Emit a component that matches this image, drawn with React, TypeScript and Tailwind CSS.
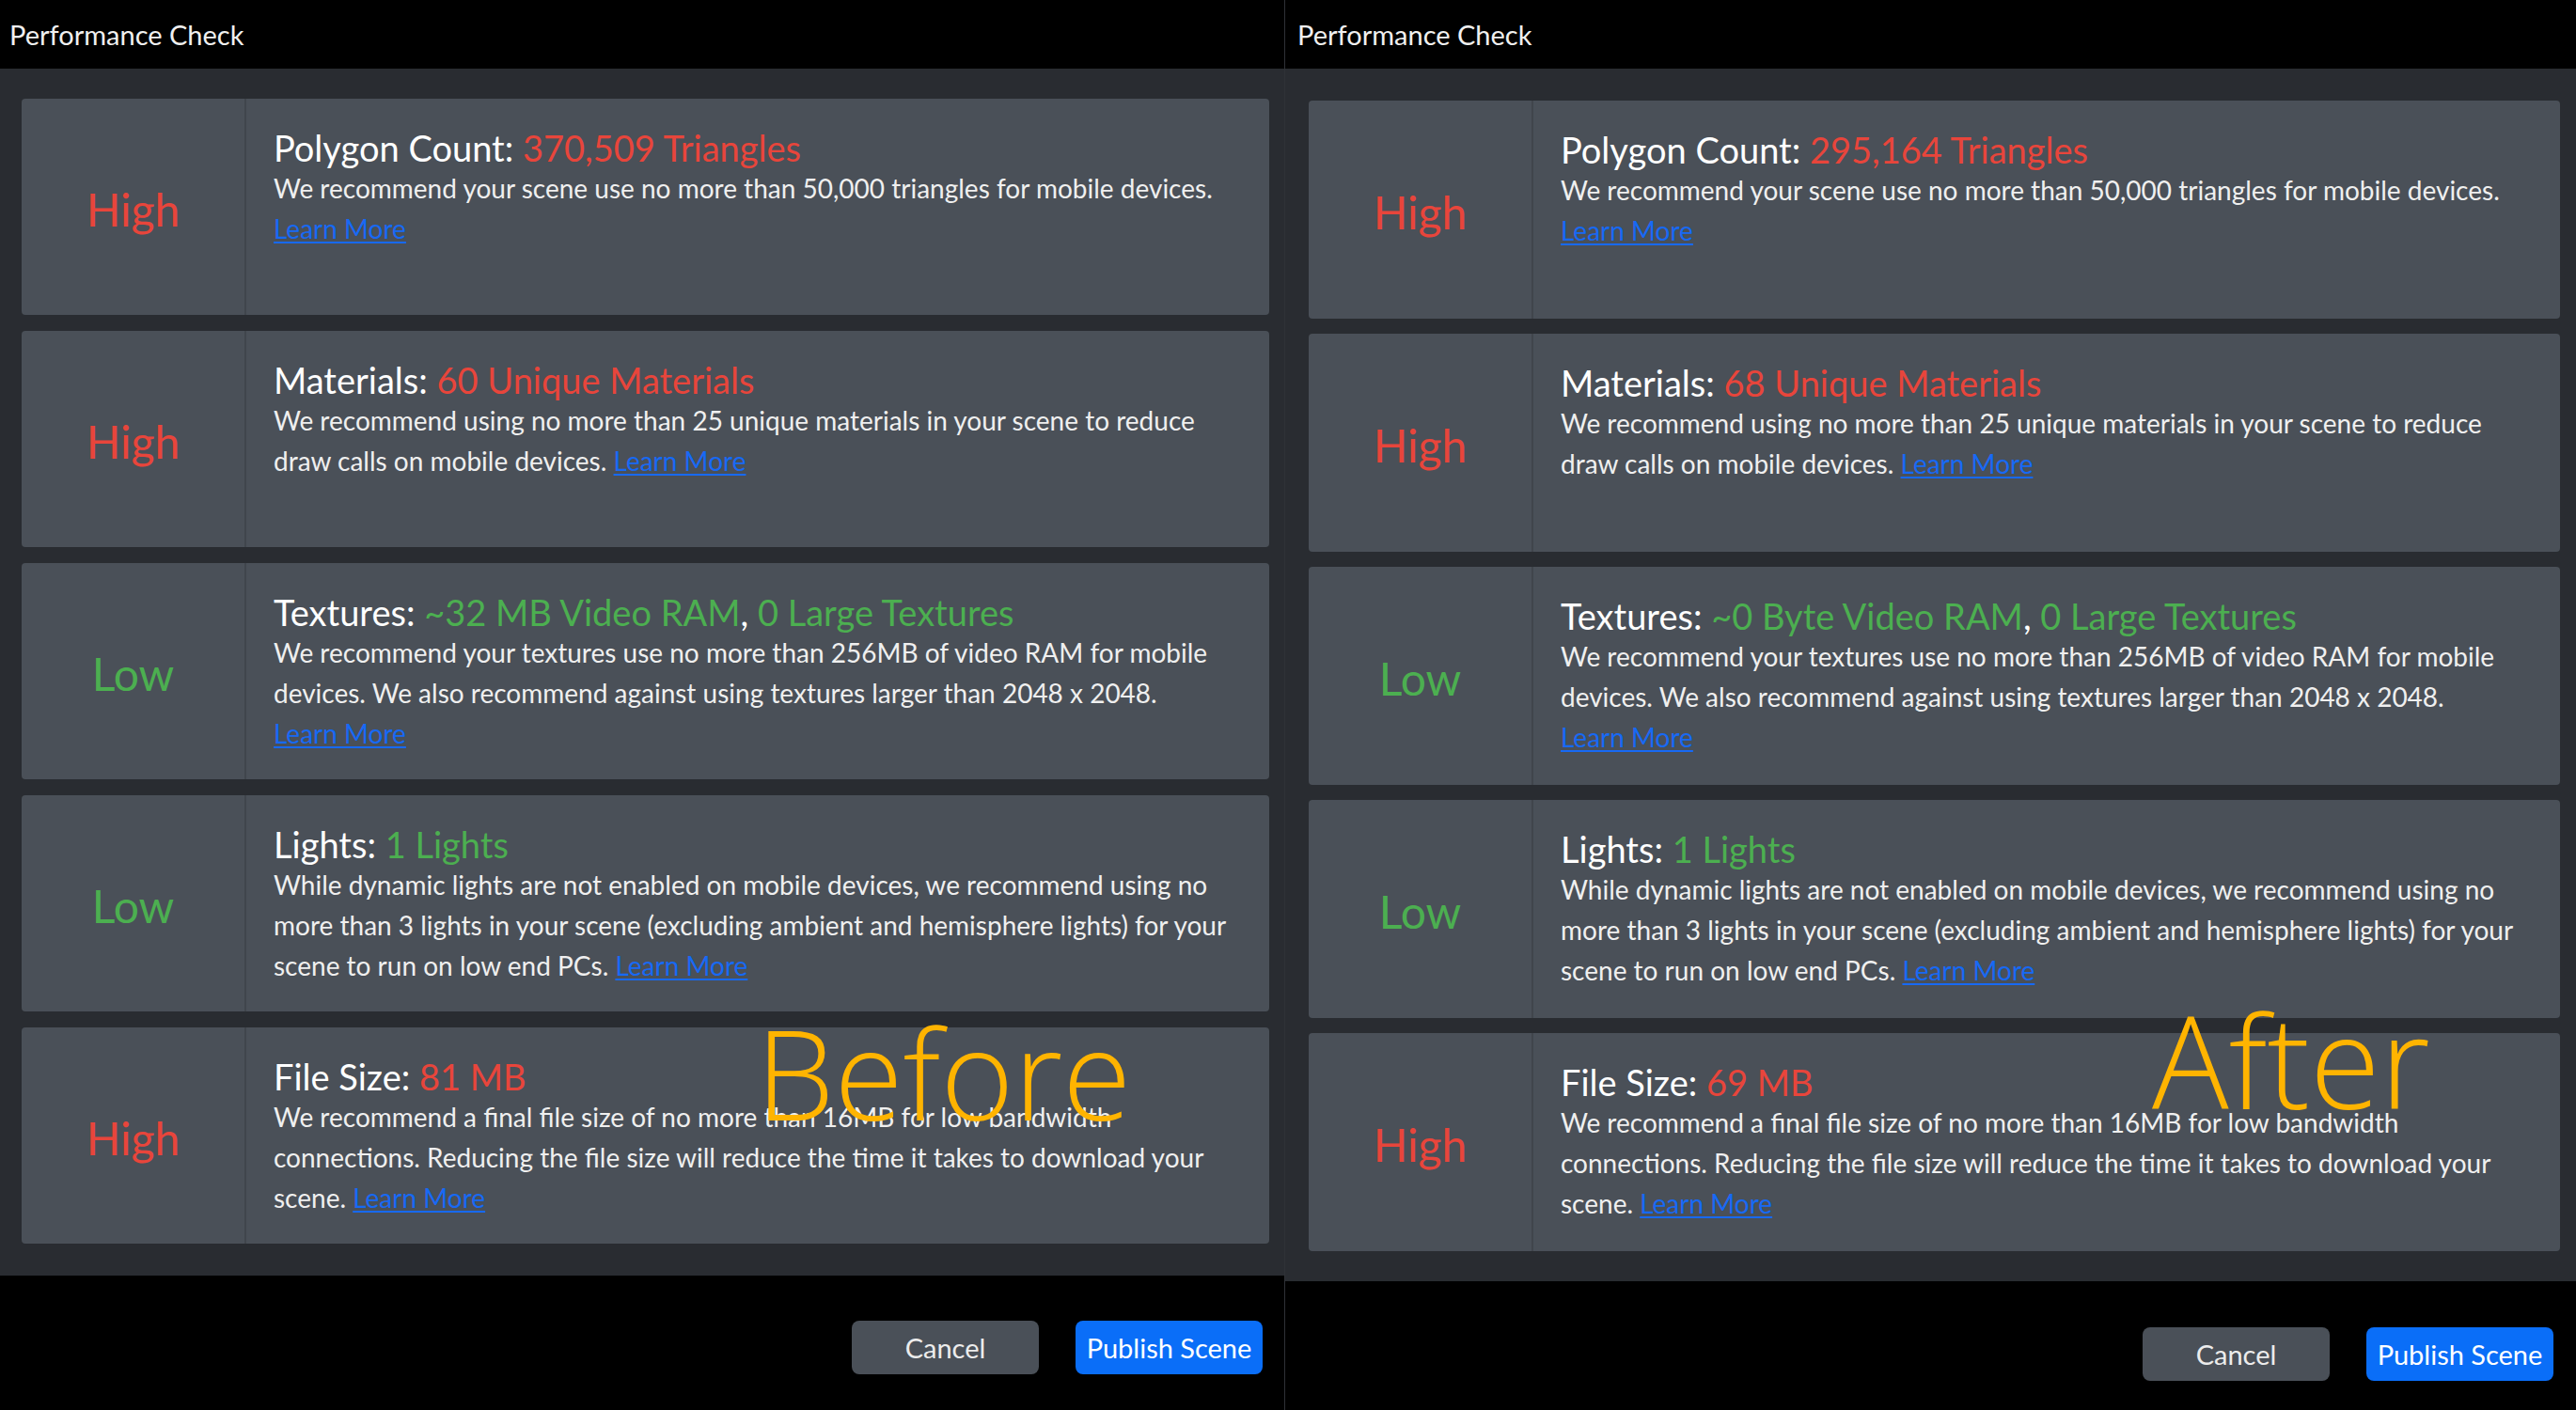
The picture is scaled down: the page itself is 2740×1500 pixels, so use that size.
import React from "react";

type Seg = { t: string; c?: "red" | "green" | "link" | "white" };
type CardData = {
  level: "High" | "Low";
  title: string;
  value: Seg[];
  lines: Seg[][];
};

const segClass = (c?: string) => {
  if (c === "red") return "text-[#e8453b]";
  if (c === "green") return "text-[#4caf50]";
  if (c === "link") return "text-[#1769f5] underline underline-offset-[3px] decoration-[2px]";
  return "";
};

const Line = ({ segs }: { segs: Seg[] }) => (
  <div className="whitespace-pre">
    {segs.map((s, i) => (
      <span key={i} className={segClass(s.c)}>
        {s.t}
      </span>
    ))}
  </div>
);

const Card = ({ d, h }: { d: CardData; h: string }) => (
  <div className={`flex ${h} rounded-[4px] bg-[#4a5058] overflow-hidden`}>
    <div
      className={`w-[239px] shrink-0 border-r-2 border-[#40454c] flex items-center justify-center pt-[6px] text-[48px] ${
        d.level === "High" ? "text-[#e8453b]" : "text-[#4caf50]"
      }`}
    >
      {d.level}
    </div>
    <div className="flex-1 pl-[29px] pt-[31px] text-[28px] leading-[43px] text-[#efefef]">
      <div className="text-[38px] text-white whitespace-pre">
        {d.title}{" "}
        {d.value.map((s, i) => (
          <span key={i} className={segClass(s.c)}>
            {s.t}
          </span>
        ))}
      </div>
      {d.lines.map((l, i) => (
        <Line key={i} segs={l} />
      ))}
    </div>
  </div>
);

const LM: Seg = { t: "Learn More", c: "link" };

const makeCards = (
  poly: string,
  mats: string,
  vram: string,
  size: string
): CardData[] => [
  {
    level: "High",
    title: "Polygon Count:",
    value: [{ t: poly, c: "red" }],
    lines: [
      [{ t: "We recommend your scene use no more than 50,000 triangles for mobile devices." }],
      [LM],
    ],
  },
  {
    level: "High",
    title: "Materials:",
    value: [{ t: mats, c: "red" }],
    lines: [
      [{ t: "We recommend using no more than 25 unique materials in your scene to reduce" }],
      [{ t: "draw calls on mobile devices. " }, LM],
    ],
  },
  {
    level: "Low",
    title: "Textures:",
    value: [
      { t: vram, c: "green" },
      { t: ", " },
      { t: "0 Large Textures", c: "green" },
    ],
    lines: [
      [{ t: "We recommend your textures use no more than 256MB of video RAM for mobile" }],
      [{ t: "devices. We also recommend against using textures larger than 2048 x 2048." }],
      [LM],
    ],
  },
  {
    level: "Low",
    title: "Lights:",
    value: [{ t: "1 Lights", c: "green" }],
    lines: [
      [{ t: "While dynamic lights are not enabled on mobile devices, we recommend using no" }],
      [{ t: "more than 3 lights in your scene (excluding ambient and hemisphere lights) for your" }],
      [{ t: "scene to run on low end PCs. " }, LM],
    ],
  },
  {
    level: "High",
    title: "File Size:",
    value: [{ t: size, c: "red" }],
    lines: [
      [{ t: "We recommend a final file size of no more than 16MB for low bandwidth" }],
      [{ t: "connections. Reducing the file size will reduce the time it takes to download your" }],
      [{ t: "scene. " }, LM],
    ],
  },
];

const Panel = ({
  cards,
  side,
}: {
  cards: CardData[];
  side: "left" | "right";
}) => {
  const left = side === "left";
  return (
    <div className={`relative flex flex-col h-full ${left ? "w-[1366px]" : "flex-1"}`}>
      <div
        className={`h-[73px] shrink-0 bg-black flex items-center text-[29px] text-[#f0f0f0] ${
          left ? "pl-[10px]" : "pl-[13px]"
        }`}
      >
        Performance Check
      </div>
      <div
        className={`flex flex-col bg-[#292c31] ${
          left
            ? "pt-[32px] pb-[34px] pl-[23px] pr-[16px] gap-[17px]"
            : "pt-[34px] pb-[32px] pl-[25px] pr-[17px] gap-[16px]"
        }`}
      >
        {cards.map((c, i) => (
          <Card key={i} d={c} h={left ? "h-[230px]" : "h-[232px]"} />
        ))}
      </div>
      <div
        className={`flex-1 bg-black flex justify-end items-start gap-[39px] ${
          left ? "pt-[48px] pr-[23px]" : "pt-[49px] pr-[24px]"
        }`}
      >
        <button className="w-[199px] h-[57px] rounded-[8px] bg-[#4a5058] text-[29px] text-[#ececec]">
          Cancel
        </button>
        <button className="w-[199px] h-[57px] rounded-[8px] bg-[#0a6ef8] text-[29px] text-white">
          Publish Scene
        </button>
      </div>
      <div
        className={`absolute text-[#ffb400] leading-none font-light pointer-events-none ${
          left ? "left-[804px] top-[1074px] text-[133px]" : "left-[922px] top-[1060px] text-[136px]"
        }`}
        style={{ fontFamily: '"Open Sans", sans-serif' }}
      >
        {left ? "Before" : "After"}
      </div>
    </div>
  );
};

export default function App() {
  return (
    <div
      className="w-[2740px] h-[1500px] flex bg-black overflow-hidden"
      style={{ fontFamily: "Lato, 'Noto Sans', sans-serif" }}
    >
      <Panel
        side="left"
        cards={makeCards("370,509 Triangles", "60 Unique Materials", "~32 MB Video RAM", "81 MB")}
      />
      <div className="w-px h-full bg-[#2f3237] shrink-0" />
      <Panel
        side="right"
        cards={makeCards("295,164 Triangles", "68 Unique Materials", "~0 Byte Video RAM", "69 MB")}
      />
    </div>
  );
}
